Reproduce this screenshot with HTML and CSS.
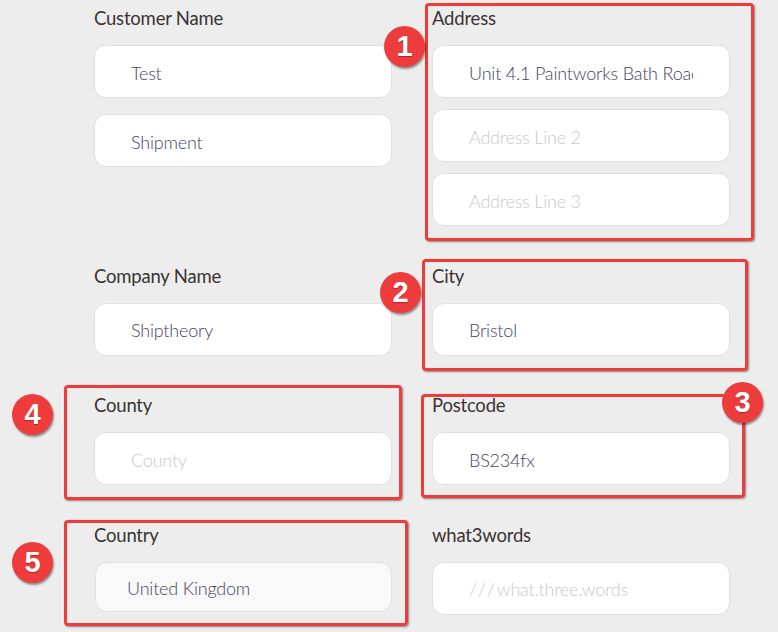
FILE: index.html
```html
<!DOCTYPE html>
<html lang="en">
<head>
<meta charset="utf-8">
<title>Address form</title>
<link rel="stylesheet" href="styles.css">
</head>
<body>
<div class="page">
  <form class="form">
    <div class="field">
      <label class="label">Customer Name</label>
      <div class="stack stack-loose">
        <div class="input"><span class="value">Test</span></div>
        <div class="input"><span class="value">Shipment</span></div>
      </div>
    </div>
    <div class="field">
      <label class="label">Address</label>
      <div class="stack">
        <div class="input"><span class="value">Unit 4.1 Paintworks Bath Road</span></div>
        <div class="input"><span class="placeholder">Address Line 2</span></div>
        <div class="input"><span class="placeholder">Address Line 3</span></div>
      </div>
    </div>
    <div class="field">
      <label class="label">Company Name</label>
      <div class="input"><span class="value">Shiptheory</span></div>
    </div>
    <div class="field">
      <label class="label">City</label>
      <div class="input"><span class="value">Bristol</span></div>
    </div>
    <div class="field">
      <label class="label">County</label>
      <div class="input"><span class="placeholder">County</span></div>
    </div>
    <div class="field">
      <label class="label">Postcode</label>
      <div class="input"><span class="value">BS234fx</span></div>
    </div>
    <div class="field">
      <label class="label">Country</label>
      <div class="input select"><span class="value">United Kingdom</span></div>
    </div>
    <div class="field">
      <label class="label">what3words</label>
      <div class="input"><span class="placeholder"><span class="slashes">///</span>what.three.words</span></div>
    </div>
  </form>

  <div class="mark box box-1"></div>
  <div class="mark box box-2"></div>
  <div class="mark box box-3"></div>
  <div class="mark box box-4"></div>
  <div class="mark box box-5"></div>

  <div class="mark badge badge-1">1</div>
  <div class="mark badge badge-2">2</div>
  <div class="mark badge badge-3">3</div>
  <div class="mark badge badge-4">4</div>
  <div class="mark badge badge-5">5</div>
</div>
</body>
</html>
```

FILE: styles.css
```css
html, body {
  margin: 0;
  padding: 0;
  background: #ededed;
}

body {
  font-family: "Lato", "Liberation Sans", sans-serif;
  width: 778px;
  height: 632px;
  overflow: hidden;
}

.page {
  position: relative;
  width: 778px;
  height: 632px;
}

.form {
  display: grid;
  grid-template-columns: 298px 298px;
  column-gap: 40px;
  row-gap: 37.5px;
  padding: 6px 0 0 94px;
  align-items: start;
}

.field {
  display: flex;
  flex-direction: column;
  gap: 15px;
}

.label {
  display: block;
  height: 24px;
  line-height: 24px;
  font-size: 18.5px;
  font-weight: 400;
  color: #3a3434;
  letter-spacing: -0.2px;
}

.stack {
  display: flex;
  flex-direction: column;
  gap: 11px;
}

.stack-loose {
  gap: 16px;
}

.input {
  box-sizing: border-box;
  height: 53px;
  background: #fff;
  border: 1px solid #e1e1e1;
  border-radius: 12px;
  padding: 2px 36px 0 36px;
  display: flex;
  align-items: center;
  font-size: 18px;
  font-weight: 300;
  letter-spacing: -0.2px;
  white-space: nowrap;
  overflow: hidden;
}

.input.select {
  background: #f9f9f9;
  padding-left: 31px;
  margin-left: 1px;
  height: 50px;
}

.value {
  color: #47445a;
  overflow: hidden;
}

.placeholder {
  color: #c9c9c9;
}

.slashes {
  letter-spacing: 5px;
  margin-right: -3px;
}

/* annotation overlays */
.mark {
  position: absolute;
}

.box {
  box-sizing: border-box;
  border: 3px solid #ee3b3b;
  border-radius: 4px;
  box-shadow: 1px 1px 2px rgba(0, 0, 0, 0.45);
}

.box-1 { left: 425px; top: 3px;   width: 329px; height: 238px; }
.box-2 { left: 422px; top: 259px; width: 326px; height: 112px; }
.box-3 { left: 421px; top: 394px; width: 324px; height: 104px; }
.box-4 { left: 64px;  top: 385px; width: 338px; height: 115px; }
.box-5 { left: 64px;  top: 520px; width: 344px; height: 106px; }

.badge {
  width: 41px;
  height: 41px;
  border-radius: 50%;
  background: #ee3b3b;
  color: #fff;
  font-family: "Liberation Sans", Arial, sans-serif;
  font-weight: 700;
  font-size: 29px;
  line-height: 41px;
  text-align: center;
  box-shadow: 1px 2px 2px rgba(0, 0, 0, 0.4);
  text-shadow: 0 1px 1px rgba(0, 0, 0, 0.3);
}

.badge-1 { left: 384px; top: 26px; }
.badge-2 { left: 380px; top: 272px; }
.badge-3 { left: 722px; top: 382px; }
.badge-4 { left: 12px;  top: 394px; }
.badge-5 { left: 12px;  top: 542px; }
```
